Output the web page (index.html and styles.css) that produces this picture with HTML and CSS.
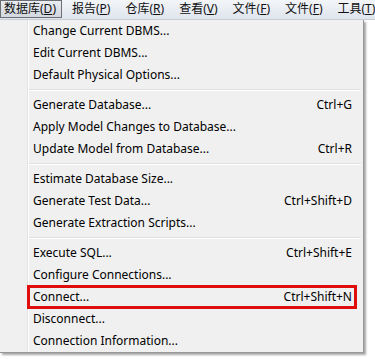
FILE: index.html
```html
<!DOCTYPE html>
<html>
<head>
<meta charset="utf-8">
<link rel="stylesheet" href="styles.css">
</head>
<body>
<div class="menubar">
  <span class="mb-item active">数据库(<u>D</u>)</span>
  <span class="mb-item">报告(<u>P</u>)</span>
  <span class="mb-item">仓库(<u>R</u>)</span>
  <span class="mb-item">查看(<u>V</u>)</span>
  <span class="mb-item">文件(<u>F</u>)</span>
  <span class="mb-item">文件(<u>F</u>)</span>
  <span class="mb-item">工具(<u>T</u>)</span>
</div>
<div class="popup">
  <div class="item"><span>Change Current DBMS...</span></div>
  <div class="item"><span>Edit Current DBMS...</span></div>
  <div class="item"><span>Default Physical Options...</span></div>
  <div class="sep"></div>
  <div class="item"><span>Generate Database...</span><span class="key">Ctrl+G</span></div>
  <div class="item"><span>Apply Model Changes to Database...</span></div>
  <div class="item"><span>Update Model from Database...</span><span class="key">Ctrl+R</span></div>
  <div class="sep"></div>
  <div class="item"><span>Estimate Database Size...</span></div>
  <div class="item"><span>Generate Test Data...</span><span class="key">Ctrl+Shift+D</span></div>
  <div class="item"><span>Generate Extraction Scripts...</span></div>
  <div class="sep"></div>
  <div class="item"><span>Execute SQL...</span><span class="key">Ctrl+Shift+E</span></div>
  <div class="item"><span>Configure Connections...</span></div>
  <div class="item marked"><span>Connect...</span><span class="key">Ctrl+Shift+N</span></div>
  <div class="item"><span>Disconnect...</span></div>
  <div class="item"><span>Connection Information...</span></div>
</div>
</body>
</html>
```
FILE: styles.css
```css
html, body {
  margin: 0;
  padding: 0;
  background: #ffffff;
  width: 375px;
  height: 359px;
  overflow: hidden;
}
body {
  font-family: "Noto Sans", "Open Sans", "Noto Sans CJK SC", sans-serif;
  color: #000;
}
.menubar {
  height: 19px;
  display: flex;
  align-items: flex-start;
  gap: 5px;
  background: linear-gradient(#f3f5f8, #dfe5ee);
  border-bottom: 1px solid #c9ced6;
  white-space: nowrap;
  overflow: hidden;
}
.mb-item {
  font-family: "Noto Sans", "Noto Sans CJK SC", sans-serif;
  font-size: 12px;
  line-height: 16px;
  height: 16px;
  padding: 0 4px;
  border: 1px solid transparent;
  color: #111;
  flex: none;
}
.mb-item u {
  text-decoration: underline;
  text-underline-offset: 1px;
}
.mb-item.active {
  border-color: #6c7075;
  background: linear-gradient(#e9ecf0, #d3d8df);
  padding: 0 5px 0 3px;
}
.popup {
  width: 363px;
  height: 332px;
  background: #f0f0f0;
  border-right: 1px solid #979797;
  border-bottom: 1px solid #979797;
  box-shadow: 2px 2px 2px rgba(0,0,0,0.35);
  background-image: linear-gradient(90deg, transparent 27px, #e2e3e3 27px, #e2e3e3 28px, #ffffff 28px, #ffffff 29px, transparent 29px);
}
.item {
  height: 22px;
  display: flex;
  align-items: center;
  justify-content: space-between;
  padding: 0 11px 0 33px;
  font-size: 12px;
  line-height: 22px;
  position: relative;
  white-space: nowrap;
}
.sep {
  height: 8px;
  margin-left: 29px;
  margin-right: 2px;
  background: linear-gradient(transparent 3px, #e0e0e0 3px, #e0e0e0 4px, #ffffff 4px, #ffffff 5px, transparent 5px);
}
.marked::after {
  content: "";
  position: absolute;
  left: 27px;
  right: 6px;
  top: -1px;
  bottom: -1px;
  border: 3px solid #e00d0d;
}
```
